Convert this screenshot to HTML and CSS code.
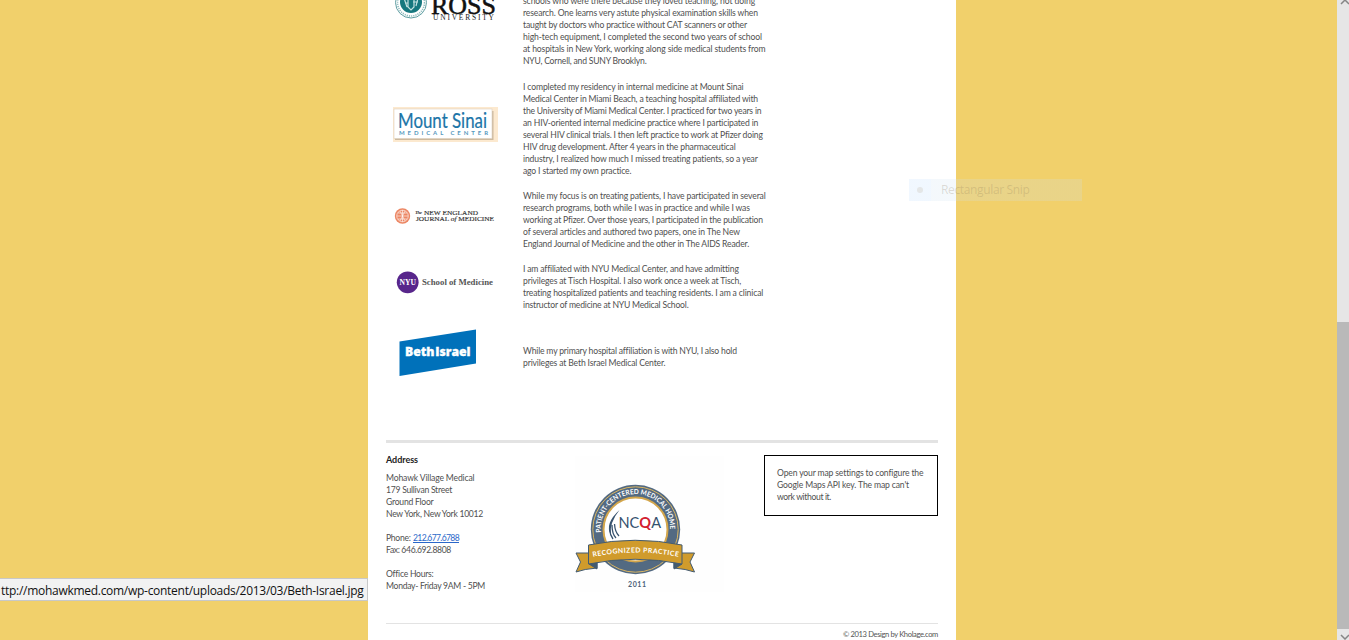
FILE: index.html
```html
<!DOCTYPE html>
<html lang="en">
<head>
<meta charset="utf-8">
<title>Mohawk Village Medical</title>
<link rel="stylesheet" href="styles.css">
</head>
<body>
<main class="page">
  <section class="row row-ross">
    <svg class="logo" width="137" height="72" viewBox="386 -5 137 72">
      <circle cx="411" cy="2.5" r="15.5" fill="#fff" stroke="#5f9ea2" stroke-width="1"/>
      <circle cx="411" cy="2.5" r="13.5" fill="none" stroke="#8fbcbe" stroke-width="1.6" stroke-dasharray="1.2 1"/>
      <circle cx="411" cy="2" r="11" fill="#16777e"/>
      <path d="M404 -2l3 9M408 -3v10l3 3 3-3V-3M418 -2l-2 8M405 3h3M413 2h5" stroke="#c3e0e0" stroke-width="1.2" fill="none"/>
      <text class="serif" x="431" y="13.500" font-size="25" textLength="65" lengthAdjust="spacingAndGlyphs" fill="#111" stroke="#111" stroke-width=".5">ROSS</text>
      <text class="serif" x="433" y="20" font-size="7.5" textLength="61" fill="#222">UNIVERSITY</text>
    </svg>
    <p class="copy"><span class="l" data-w="232">schools who were there because they loved teaching, not doing</span><span class="l" data-w="235">research. One learns very astute physical examination skills when</span><span class="l" data-w="224">taught by doctors who practice without CAT scanners or other</span><span class="l" data-w="239">high-tech equipment, I completed the second two years of school</span><span class="l" data-w="242.5">at hospitals in New York, working along side medical students from</span><span class="l" data-w="123.5">NYU, Cornell, and SUNY Brooklyn.</span></p>
  </section>
  <section class="row row-sinai">
    <svg class="logo" width="137" height="96" viewBox="386 81 137 96">
      <rect x="393" y="107" width="105" height="35" fill="#fce9cf"/>
      <rect x="395" y="111" width="98.500" height="29" fill="#cdb99e"/>
      <rect x="394" y="109" width="98" height="29.500" fill="#fff" stroke="#ddd0bf" stroke-width=".6"/>
      <text class="lato" x="398" y="128" font-size="20.500" textLength="89" lengthAdjust="spacingAndGlyphs" fill="#1c75a8" stroke="#1c75a8" stroke-width=".2">Mount Sinai</text>
      <text class="lato" x="399" y="135" font-size="6" font-weight="bold" textLength="89" fill="#5598bd">MEDICAL CENTER</text>
    </svg>
    <p class="copy"><span class="l" data-w="220.500">I completed my residency in internal medicine at Mount Sinai</span><span class="l" data-w="234.500">Medical Center in Miami Beach, a teaching hospital affiliated with</span><span class="l" data-w="238.500">the University of Miami Medical Center. I practiced for two years in</span><span class="l" data-w="235.500">an HIV-oriented internal medicine practice where I participated in</span><span class="l" data-w="239.500">several HIV clinical trials. I then left practice to work at Pfizer doing</span><span class="l" data-w="212.500">HIV drug development. After 4 years in the pharmaceutical</span><span class="l" data-w="235">industry, I realized how much I missed treating patients, so a year</span><span class="l" data-w="108.500">ago I started my own practice.</span></p>
  </section>
  <section class="row row-nejm">
    <svg class="logo" width="137" height="60" viewBox="386 190 137 60">
      <circle cx="402.500" cy="216" r="7.700" fill="#ec8663"/>
      <g stroke="#fff" stroke-width=".6" fill="none"><circle cx="402.500" cy="216" r="5.800"/><path d="M402.500 210v12M398 213h9M397 216h11M398 219h9M400 211l5 10M405 211l-5 10"/></g>
      <text class="serif" x="415" y="214" font-size="5" font-style="italic" font-weight="bold" textLength="7" fill="#333">The</text>
      <text class="serif" x="424" y="214.500" font-size="6.500" textLength="54" lengthAdjust="spacingAndGlyphs" fill="#333" stroke="#333" stroke-width=".15">NEW ENGLAND</text>
      <text class="serif" x="416" y="221" font-size="6.500" textLength="78" lengthAdjust="spacingAndGlyphs" fill="#333" stroke="#333" stroke-width=".15">JOURNAL <tspan font-style="italic">of</tspan> MEDICINE</text>
    </svg>
    <p class="copy"><span class="l" data-w="243">While my focus is on treating patients, I have participated in several</span><span class="l" data-w="227">research programs, both while I was in practice and while I was</span><span class="l" data-w="240">working at Pfizer. Over those years, I participated in the publication</span><span class="l" data-w="217">of several articles and authored two papers, one in The New</span><span class="l" data-w="226">England Journal of Medicine and the other in The AIDS Reader.</span></p>
  </section>
  <section class="row row-nyu">
    <svg class="logo" width="137" height="48" viewBox="386 263 137 48">
      <circle cx="407.700" cy="282.300" r="10.900" fill="#58268b"/>
      <text class="serif" x="399.500" y="285" font-size="7.500" font-weight="bold" textLength="16.500" lengthAdjust="spacingAndGlyphs" fill="#fff">NYU</text>
      <text class="serif" x="422" y="285" font-size="9" font-weight="bold" textLength="71" lengthAdjust="spacingAndGlyphs" fill="#555">School of Medicine</text>
    </svg>
    <p class="copy"><span class="l" data-w="215">I am affiliated with NYU Medical Center, and have admitting</span><span class="l" data-w="218">privileges at Tisch Hospital. I also work once a week at Tisch,</span><span class="l" data-w="240.500">treating hospitalized patients and teaching residents. I am a clinical</span><span class="l" data-w="165.500">instructor of medicine at NYU Medical School.</span></p>
  </section>
  <section class="row row-beth">
    <svg class="logo" width="137" height="48" viewBox="386 329 137 48">
      <path d="M399.500 341.500L476 329.500V363.500L399.500 376Z" fill="#0071ba"/>
      <text class="opensans" x="405" y="356.300" font-size="11.500" font-weight="800" textLength="65.500" lengthAdjust="spacingAndGlyphs" fill="#fff" stroke="#fff" stroke-width=".3">Beth<tspan dx=".6">Israel</tspan></text>
    </svg>
    <p class="copy"><span class="l" data-w="213.500">While my primary hospital affiliation is with NYU, I also hold</span><span class="l" data-w="142.500">privileges at Beth Israel Medical Center.</span></p>
  </section>

  <footer class="foot">
    <div class="address">
      <h4><span class="l" data-w="32">Address</span></h4>
      <p><span class="l" data-w="88.500">Mohawk Village Medical</span><span class="l" data-w="66">179 Sullivan Street</span><span class="l" data-w="47.500">Ground Floor</span><span class="l" data-w="97">New York, New York 10012</span></p>
      <p><span class="pair"><span class="l" data-w="24.500">Phone:</span> <a class="l" data-w="46" href="#">212.677.6788</a></span><span class="l" data-w="65">Fax: 646.692.8808</span></p>
      <p><span class="l" data-w="47">Office Hours:</span><span class="l" data-w="99">Monday- Friday 9AM - 5PM</span></p>
    </div>
    <svg class="badge" width="149" height="136" viewBox="575 456 149 136">
      <defs>
        <path id="arc" d="M601 532.500A34.700 34.700 0 1 1 670 532.500"/>
        <path id="curve" d="M590 557.500Q635.500 547.500 682 557.500"/>
      </defs>
      <rect x="575" y="456" width="149" height="136" fill="#fefefe"/>
      <circle cx="635.500" cy="529.500" r="44.700" fill="#536a82"/>
      <circle cx="635.500" cy="529.500" r="42.700" fill="none" stroke="#d9b563" stroke-width="1"/>
      <circle cx="635.500" cy="529.500" r="32" fill="#fff" stroke="#d3a64c" stroke-width="2"/>
      <text class="lato" font-size="7" font-weight="bold" fill="#fff"><textPath href="#arc" textLength="113" lengthAdjust="spacingAndGlyphs">PATIENT-CENTERED MEDICAL HOME</textPath></text>
      <path d="M619.500 510Q604 524 611 535Q609 523 619.500 510Z" fill="#38536f"/>
      <g fill="none" stroke="#38536f" stroke-width="1.300"><path d="M612 525Q612 534 616 538M609.500 529Q610 535 613 539M614.500 524Q615 532 619 536"/></g>
      <text class="lato" x="618.500" y="528.400" font-size="15.500" textLength="42.500" lengthAdjust="spacingAndGlyphs" fill="#35516e">NC<tspan fill="#d3202f" font-weight="bold">Q</tspan>A</text>
      <g stroke="#435b70" stroke-width="1">
        <path d="M589 553L576 553L580.500 562L576 572Q584 569 597 568V555Z" fill="#d09b2c"/>
        <path d="M681 553L694.500 553L690 562L694.500 572Q686 569 674 568V555Z" fill="#d09b2c"/>
        <path d="M589 564L597 562V569Z M682 564L674 562V569Z" fill="#435b70"/>
        <path d="M588.500 545Q635 535.500 682 545V564Q635 554.500 588.500 564Z" fill="#d09b2c"/>
      </g>
      <text class="lato" font-size="6.800" font-weight="bold" fill="#fff"><textPath href="#curve" startOffset="3" textLength="86">RECOGNIZED PRACTICE</textPath></text>
      <text class="lato" x="628" y="587" font-size="7" font-weight="bold" textLength="18" fill="#4b6077">2011</text>
    </svg>
    <div class="map"><span class="l" data-w="146">Open your map settings to configure the</span><span class="l" data-w="132">Google Maps API key. The map can't</span><span class="l" data-w="54">work without it.</span></div>
  </footer>
  <div class="credit"><span class="l" data-w="95">© 2013 Design by Kholage.com</span></div>
</main>

<div class="snip"><i class="snip-icon"></i><span class="l" data-w="88.500">Rectangular Snip</span></div>
<div class="status"><span class="l" data-w="362.500">ttp://mohawkmed.com/wp-content/uploads/2013/03/Beth-Israel.jpg</span></div>
<aside class="scroll">
  <svg width="12" height="8" viewBox="0 0 12 8"><path d="M4 4L8 0L12 4" fill="none" stroke="#858585" stroke-width="1.500"/></svg>
  <div class="thumb"></div>
  <svg class="down" width="12" height="8" viewBox="0 0 12 8"><path d="M4 3L8 7L12 3" fill="none" stroke="#858585" stroke-width="1.500"/></svg>
</aside>
<script src="lines.js"></script>
</body>
</html>
```

FILE: styles.css
```css
* { box-sizing: border-box; }
html, body { height: 100%; }
body { margin: 0; overflow: hidden; position: relative; background: #f1d06b; font: 8.6px/12px Lato, "Open Sans", sans-serif; color: #505050; }
p, h4 { margin: 0; }
.page { width: 588px; height: 640px; margin-left: 368px; padding: 0 18px; background: #fff; overflow: hidden; display: flex; flex-direction: column; }
.row { display: flex; flex: none; }
.row-ross { margin-top: -5px; height: 72px; }
.row-sinai { margin-top: 14px; height: 96px; }
.row-nejm { margin-top: 13px; height: 60px; }
.row-nyu { margin-top: 13px; height: 48px; }
.row-beth { margin-top: 18px; height: 48px; }
.row-beth .copy { padding-top: 16px; }
.logo, .badge { flex: none; display: block; }
.copy { width: 250px; }
.l { display: block; width: max-content; white-space: nowrap; }
.serif { font-family: "Liberation Serif", serif; }
.lato { font-family: Lato, sans-serif; }
.opensans { font-family: "Open Sans", sans-serif; }
.foot { flex: none; height: 184px; margin-top: 63px; border-top: 3px solid #e3e3e3; border-bottom: 1px solid #e3e3e3; display: flex; }
.address { width: 189px; padding-top: 11px; }
.address h4 { font-size: 9px; font-weight: bold; color: #222; margin-bottom: 6px; }
.address p { margin-bottom: 12px; }
.pair { display: flex; gap: 2.5px; }
.pair a { color: #2a67c9; text-decoration: underline; }
.badge { margin-top: 13px; }
.map { width: 174px; height: 61px; margin: 12px 0 0 auto; padding: 11px 12px; border: 1px solid #000; }
.credit { font-size: 7.6px; padding-top: 4px; display: flex; justify-content: flex-end; color: #555; }
.snip { position: absolute; left: 909px; top: 179px; width: 173px; height: 22px; display: flex; align-items: center; background: linear-gradient(90deg, rgba(190,221,255,.22) 22px, rgba(205,225,240,.22) 22px); font: 12px/20px "Open Sans", sans-serif; color: rgba(130,110,80,.22); }
.snip-icon { width: 6px; height: 6px; border-radius: 50%; background: rgba(190,180,160,.25); margin: 0 18px 0 8px; }
.status { position: absolute; left: 0; top: 578px; width: 368px; height: 23px; padding-left: 1px; background: #f2f2f2; border: 1px solid #c8c8c8; border-left: 0; font: 12px/24px "Open Sans", sans-serif; color: #111; }
.scroll { position: absolute; right: 0; top: 0; width: 12px; height: 640px; background: #e6e6e6; display: flex; flex-direction: column; }
.scroll svg { display: block; }
.thumb { height: 307px; margin-top: 314px; background: #b9b9b9; }
.down { margin-top: 3px; }
```

FILE: lines.js
```js
// Adjusts letter spacing so each line fills its measured width.
document.querySelectorAll('.l[data-w]').forEach(function (el) {
  var natural = el.getBoundingClientRect().width;
  var gap = (parseFloat(el.dataset.w) - natural) / el.textContent.length;
  el.style.letterSpacing = gap + 'px';
});
```
